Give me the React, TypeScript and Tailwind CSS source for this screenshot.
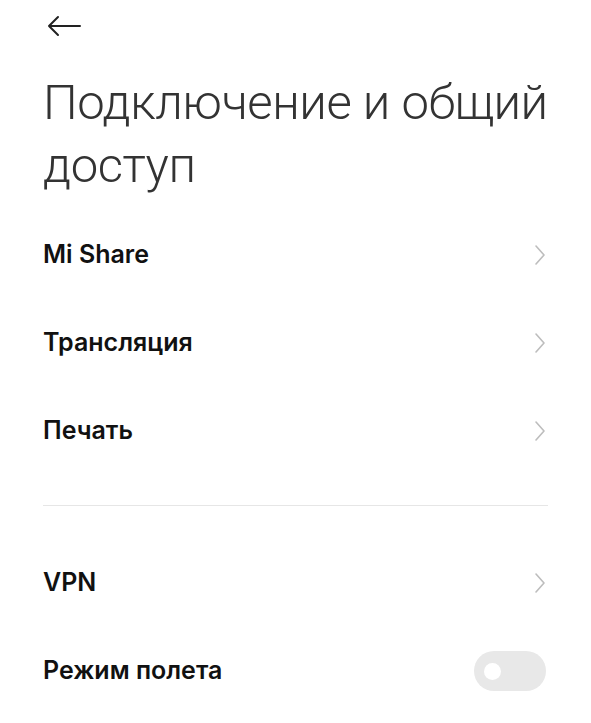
import React from 'react';

const Chevron = () => (
  <svg width="12" height="22" viewBox="0 0 12 22" fill="none" className="text-[#bdbdbd]">
    <path d="M2 2l8 9-8 9" stroke="currentColor" strokeWidth="1.6" strokeLinecap="round" strokeLinejoin="round" />
  </svg>
);

const Row = ({ label, children }: { label: string; children?: React.ReactNode }) => (
  <div className="flex items-center justify-between h-[88px] pr-[2px]">
    <span className="text-[25px] font-semibold text-[#111]" style={{ fontFamily: 'Inter, Roboto, sans-serif' }}>
      {label}
    </span>
    {children ?? <Chevron />}
  </div>
);

export default function App() {
  return (
    <div className="w-[591px] h-[723px] bg-white overflow-hidden px-[43px]" style={{ fontFamily: 'Roboto, "Noto Sans", sans-serif' }}>
      <div className="h-[50px] flex items-center pt-[2px]">
        <svg width="34" height="22" viewBox="0 0 34 22" fill="none" className="ml-[4px]">
          <path d="M33 11H2M11 2L2 11l9 9" stroke="#222" strokeWidth="2" strokeLinecap="round" strokeLinejoin="round" />
        </svg>
      </div>
      <h1 className="mt-[21px] mr-[-14px] text-[49px] leading-[63px] font-light text-[#333] tracking-[-0.45px]">
        Подключение и общий доступ
      </h1>
      <div className="mt-[14px]">
        <Row label="Mi Share" />
        <Row label="Трансляция" />
        <Row label="Печать" />
      </div>
      <div className="h-[1px] bg-[#e6e6e6] mt-[30px]" />
      <div className="mt-[33px]">
        <Row label="VPN" />
        <Row label="Режим полета">
          <div className="w-[72px] h-[40px] rounded-full bg-[#e8e8e8] flex items-center pl-[10px]">
            <div className="w-[17px] h-[17px] rounded-full bg-white" />
          </div>
        </Row>
      </div>
    </div>
  );
}
